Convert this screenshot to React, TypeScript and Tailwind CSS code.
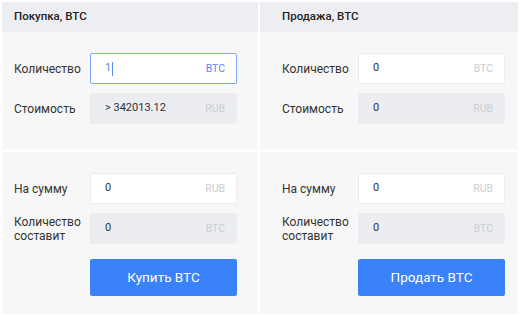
import React from "react";

type FieldProps = {
  label: React.ReactNode;
  value: React.ReactNode;
  unit: string;
  variant: "focus" | "normal" | "disabled";
};

function Field({ label, value, unit, variant }: FieldProps) {
  const box =
    variant === "focus"
      ? "bg-white border border-[#80a8f6]"
      : variant === "normal"
      ? "bg-white border border-[#ececec]"
      : "bg-[#ebedf0] border border-[#ebedf0]";
  const unitColor = variant === "focus" ? "text-[#5d86ef]" : "text-[#c9cdd3]";
  return (
    <div className="flex items-center">
      <div className="w-[76px] text-[12px] leading-[14px] text-[#333333]">{label}</div>
      <div className={`w-[147px] h-[31px] rounded-[2px] flex items-center justify-between pl-[14px] pr-[11px] ${box}`}>
        <span className="text-[11px] text-[#333333]">{value}</span>
        <span className={`text-[10.5px] ${unitColor}`}>{unit}</span>
      </div>
    </div>
  );
}

function Column({
  title,
  pl,
  width,
  first,
  button,
}: {
  title: string;
  pl: string;
  width: string;
  first: { qty: React.ReactNode; cost: string; focus: boolean };
  button: string;
}) {
  return (
    <div className={`${width} flex flex-col`}>
      <div className={`h-[30px] bg-[#eceef1] flex items-center ${pl} text-[11.5px] font-medium text-[#222222]`}>
        {title}
      </div>
      <div className={`bg-[#f7f7f7] pt-[21px] pb-[26px] ${pl} flex flex-col gap-[9px]`}>
        <Field label="Количество" value={first.qty} unit="BTC" variant={first.focus ? "focus" : "normal"} />
        <Field label="Стоимость" value={first.cost} unit="RUB" variant="disabled" />
      </div>
      <div className={`mt-[2px] bg-[#f7f7f7] pt-[21px] pb-[18px] ${pl} flex flex-col`}>
        <Field label="На сумму" value="0" unit="RUB" variant="normal" />
        <div className="mt-[9px]">
          <Field
            label={
              <>
                Количество
                <br />
                составит
              </>
            }
            value="0"
            unit="BTC"
            variant="disabled"
          />
        </div>
        <div className="mt-[15px] flex">
          <div className="w-[76px]" />
          <button className="w-[147px] h-[37px] rounded-[2px] bg-[#3a82f7] text-white text-[13.5px]">
            {button}
          </button>
        </div>
      </div>
    </div>
  );
}

export default function App() {
  return (
    <div className="w-[520px] h-[316px] bg-white flex gap-[2px] pt-[2px] px-[2px] font-['Roboto',sans-serif]">
      <Column
        title="Покупка, BTC"
        pl="pl-[12px]"
        width="w-[256px]"
        first={{
          qty: (
            <span className="flex items-center text-[#6d82e8]">
              1<span className="ml-[1px] inline-block w-[1px] h-[14px] bg-[#5d86ef]" />
            </span>
          ),
          cost: "> 342013.12",
          focus: true,
        }}
        button="Купить BTC"
      />
      <Column
        title="Продажа, BTC"
        pl="pl-[22px]"
        width="w-[258px]"
        first={{ qty: "0", cost: "0", focus: false }}
        button="Продать BTC"
      />
    </div>
  );
}
